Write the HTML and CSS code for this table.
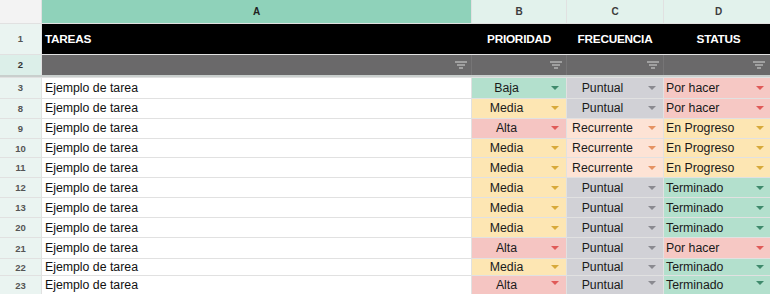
FILE: index.html
```html
<!DOCTYPE html>
<html lang="es">
<head>
<meta charset="utf-8">
<title>Tareas</title>
<link rel="stylesheet" href="styles.css">
</head>
<body>
<div class="sheet">
  <div class="row hdr">
    <div class="corner"></div>
    <div class="colh sel">A</div>
    <div class="colh">B</div>
    <div class="colh">C</div>
    <div class="colh">D</div>
  </div>
  <div class="row r1">
    <div class="rh">1</div>
    <div class="th left">TAREAS</div>
    <div class="th">PRIORIDAD</div>
    <div class="th">FRECUENCIA</div>
    <div class="th">STATUS</div>
  </div>
  <div class="row r2">
    <div class="rh rh2">2</div>
    <div class="fc"><svg class="filt" viewBox="0 0 12 8"><path d="M0 1h12M2 4h8M4 7h4"/></svg></div>
    <div class="fc"><svg class="filt" viewBox="0 0 12 8"><path d="M0 1h12M2 4h8M4 7h4"/></svg></div>
    <div class="fc"><svg class="filt" viewBox="0 0 12 8"><path d="M0 1h12M2 4h8M4 7h4"/></svg></div>
    <div class="fc"><svg class="filt" viewBox="0 0 12 8"><path d="M0 1h12M2 4h8M4 7h4"/></svg></div>
  </div>

  <div class="row d20 first">
    <div class="rh">3</div><div class="task">Ejemplo de tarea</div>
    <div class="c ctr baja"><span class="v">Baja</span><i class="ar"></i></div>
    <div class="c ctr punt"><span class="v">Puntual</span><i class="ar"></i></div>
    <div class="c por"><span class="v">Por hacer</span><i class="ar"></i></div>
  </div>
  <div class="row d19">
    <div class="rh">8</div><div class="task">Ejemplo de tarea</div>
    <div class="c ctr media"><span class="v">Media</span><i class="ar"></i></div>
    <div class="c ctr punt"><span class="v">Puntual</span><i class="ar"></i></div>
    <div class="c por"><span class="v">Por hacer</span><i class="ar"></i></div>
  </div>
  <div class="row d19">
    <div class="rh">9</div><div class="task">Ejemplo de tarea</div>
    <div class="c ctr alta"><span class="v">Alta</span><i class="ar"></i></div>
    <div class="c ctr rec"><span class="v">Recurrente</span><i class="ar"></i></div>
    <div class="c prog"><span class="v">En Progreso</span><i class="ar"></i></div>
  </div>
  <div class="row d19">
    <div class="rh">10</div><div class="task">Ejemplo de tarea</div>
    <div class="c ctr media"><span class="v">Media</span><i class="ar"></i></div>
    <div class="c ctr rec"><span class="v">Recurrente</span><i class="ar"></i></div>
    <div class="c prog"><span class="v">En Progreso</span><i class="ar"></i></div>
  </div>
  <div class="row d19">
    <div class="rh">11</div><div class="task">Ejemplo de tarea</div>
    <div class="c ctr media"><span class="v">Media</span><i class="ar"></i></div>
    <div class="c ctr rec"><span class="v">Recurrente</span><i class="ar"></i></div>
    <div class="c prog"><span class="v">En Progreso</span><i class="ar"></i></div>
  </div>
  <div class="row d19">
    <div class="rh">12</div><div class="task">Ejemplo de tarea</div>
    <div class="c ctr media"><span class="v">Media</span><i class="ar"></i></div>
    <div class="c ctr punt"><span class="v">Puntual</span><i class="ar"></i></div>
    <div class="c term"><span class="v">Terminado</span><i class="ar"></i></div>
  </div>
  <div class="row d19">
    <div class="rh">13</div><div class="task">Ejemplo de tarea</div>
    <div class="c ctr media"><span class="v">Media</span><i class="ar"></i></div>
    <div class="c ctr punt"><span class="v">Puntual</span><i class="ar"></i></div>
    <div class="c term"><span class="v">Terminado</span><i class="ar"></i></div>
  </div>
  <div class="row d19">
    <div class="rh">20</div><div class="task">Ejemplo de tarea</div>
    <div class="c ctr media"><span class="v">Media</span><i class="ar"></i></div>
    <div class="c ctr punt"><span class="v">Puntual</span><i class="ar"></i></div>
    <div class="c term"><span class="v">Terminado</span><i class="ar"></i></div>
  </div>
  <div class="row d20 tall">
    <div class="rh">21</div><div class="task">Ejemplo de tarea</div>
    <div class="c ctr alta"><span class="v">Alta</span><i class="ar"></i></div>
    <div class="c ctr punt"><span class="v">Puntual</span><i class="ar"></i></div>
    <div class="c por"><span class="v">Por hacer</span><i class="ar"></i></div>
  </div>
  <div class="row d16">
    <div class="rh">22</div><div class="task">Ejemplo de tarea</div>
    <div class="c ctr media"><span class="v">Media</span><i class="ar"></i></div>
    <div class="c ctr punt"><span class="v">Puntual</span><i class="ar"></i></div>
    <div class="c term"><span class="v">Terminado</span><i class="ar"></i></div>
  </div>
  <div class="row d17">
    <div class="rh">23</div><div class="task">Ejemplo de tarea</div>
    <div class="c ctr alta"><span class="v">Alta</span><i class="ar up"></i></div>
    <div class="c ctr punt"><span class="v">Puntual</span><i class="ar up"></i></div>
    <div class="c term"><span class="v">Terminado</span><i class="ar up"></i></div>
  </div>
</div>
</body>
</html>
```

FILE: styles.css
```css
* { box-sizing: border-box; margin: 0; padding: 0; }
html, body { width: 770px; height: 294px; overflow: hidden; background: #fff; }
body { font-family: "Liberation Sans", Arial, sans-serif; }

.sheet {
  display: flex;
  flex-direction: column;
  gap: 1px;
  background: #e1e1e1;
  width: 772px;
  height: 294px;
}

.row {
  display: grid;
  grid-template-columns: 41px 429px 94px 96px 109px;
  gap: 1px;
}

.hdr { height: 23px; }
.r1 { height: 30px; }
.r2 { height: 22px; border-bottom: 2px solid #c9cfcd; }
.d20 { height: 20px; }
.d19 { height: 19px; }
.d16 { height: 16px; }
.d17 { height: 18px; }

.corner { background: #f3f3f3; }
.colh {
  background: #e2f2ec;
  color: #3c3c3c;
  font-size: 10px;
  font-weight: bold;
  display: flex;
  align-items: center;
  justify-content: center;
}
.colh.sel { background: #8fd2ba; color: #222; }

.rh {
  background: #eaf4f1;
  color: #555;
  font-size: 9.5px;
  font-weight: bold;
  display: flex;
  align-items: center;
  justify-content: center;
}
.rh2 { background: #dcefe9; color: #333; }

.th {
  background: #000;
  color: #fff;
  font-size: 11.8px;
  font-weight: bold;
  letter-spacing: -0.25px;
  display: flex;
  align-items: center;
  justify-content: center;
  padding-top: 1px;
}
.th + .th { box-shadow: -1px 0 0 #000; }
.th.left { justify-content: flex-start; padding-left: 3px; }

.fc {
  background: #6a696a;
  display: flex;
  align-items: center;
  justify-content: flex-end;
  padding-right: 4px;
}
.fc + .fc { box-shadow: -1px 0 0 #767576; }
.filt { width: 12px; height: 8px; fill: none; stroke: #b3b3b3; stroke-width: 1.4; }
.fc:last-child { padding-right: 8px; }

.task {
  background: #fff;
  color: #111;
  font-size: 12.3px;
  display: flex;
  align-items: center;
  padding-left: 3px;
}

.c {
  display: flex;
  align-items: center;
  font-size: 12.3px;
  color: #1a1a1a;
  padding-left: 2px;
  padding-right: 7px;
}
.c .v { flex: 1; white-space: nowrap; }
.c.ctr .v { text-align: center; padding-right: 12px; }
.c:last-child { padding-right: 9px; }

.ar {
  width: 0;
  height: 0;
  border-left: 4px solid transparent;
  border-right: 4px solid transparent;
  border-top: 4px solid #888;
}
.ar.up { margin-top: -5px; }

.baja { background: #b3e0cd; }
.baja .ar { border-top-color: #3f8a6c; }
.media { background: #fde6b3; }
.media .ar { border-top-color: #d7a93a; }
.alta { background: #f5c5c2; }
.alta .ar { border-top-color: #e05a58; }
.punt { background: #d1d1d6; }
.punt .ar { border-top-color: #8a8a90; }
.rec { background: #fde3d5; }
.rec .ar { border-top-color: #e59262; }
.por { background: #f6c8c4; }
.por .ar { border-top-color: #e05a58; }
.prog { background: #fde6b3; }
.prog .ar { border-top-color: #d7a93a; }
.term { background: #b3e0cd; }
.term .ar { border-top-color: #3f8a6c; }

.d16 .c, .d16 .task, .d17 .c, .d17 .task { line-height: 1; }
```
